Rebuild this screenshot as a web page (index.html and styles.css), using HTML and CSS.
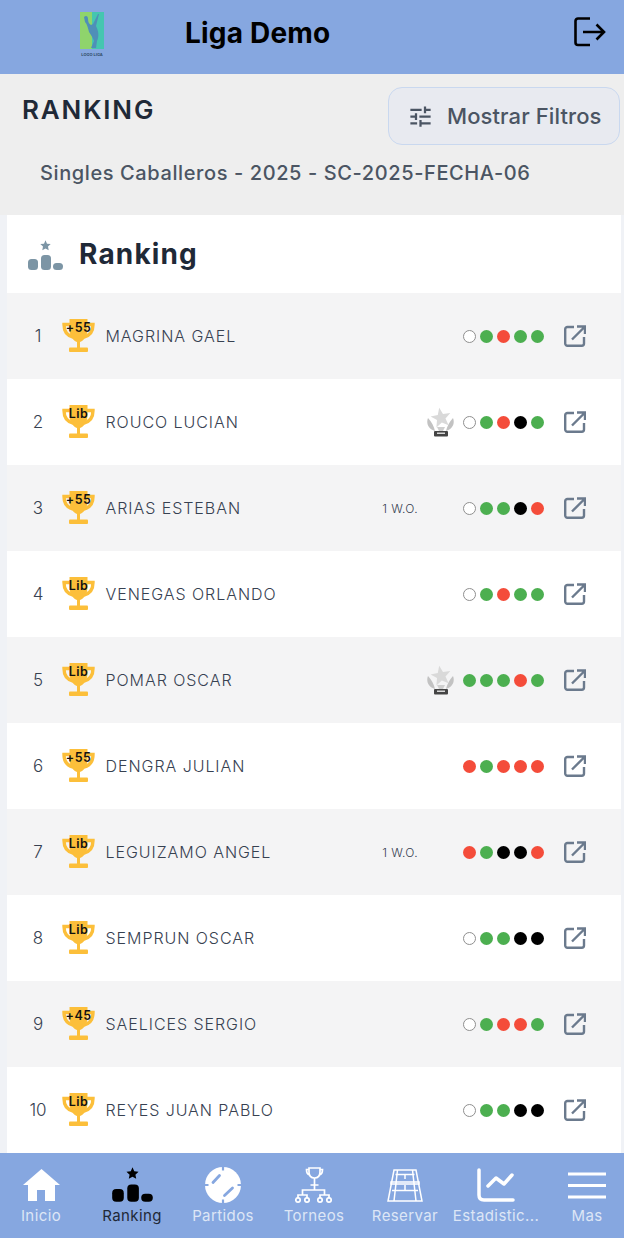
FILE: index.html
```html
<!DOCTYPE html>
<html>
	<head>
		<meta charset="UTF-8">
		<title>Liga Demo</title>
		<link rel="stylesheet" href="styles.css">
	</head>
	<body>
		<svg class="sprite">
			<symbol id="trophy" viewBox="0 0 33 33">
				<path d="M8 5.500H2C2 12 5 16.500 11 18M25 5.500h6C31 12 28 16.500 22 18" fill="none" stroke="#fcbf3a" stroke-width="3.400"/>
				<path d="M7.500 0H25.500V10C25.500 18 21 22 18 23V29H15V23C12 22 7.500 18 7.500 10Z" fill="#fcbf3a"/>
				<rect x="7" y="28.500" width="19" height="4.500" rx="1" fill="#fcbf3a"/>
			</symbol>
			<symbol id="open" viewBox="0 0 22 22">
				<path d="M10 2H3.500A2.200 2.200 0 0 0 1.200 4.200V18.500A2.200 2.200 0 0 0 3.500 20.700H17.800A2.200 2.200 0 0 0 20 18.500V12" fill="none" stroke="#6b7a8d" stroke-width="2.400"/>
				<path d="M8 14.500L20 2.500M13 1.500H21V9" fill="none" stroke="#6b7a8d" stroke-width="2.400"/>
			</symbol>
			<symbol id="podium" viewBox="0 0 35 31">
				<polygon points="17.500,0.300 19,3.700 22.700,4.100 20,6.600 20.700,10.200 17.500,8.400 14.300,10.200 15,6.600 12.300,4.100 16,3.700"/>
				<rect x="0" y="19" width="10" height="11" rx="3.500"/>
				<rect x="13" y="15" width="10" height="15" rx="3.500"/>
				<rect x="25" y="23" width="10" height="7" rx="3.500"/>
			</symbol>
			<symbol id="medal" viewBox="0 0 28 30">
				<path d="M2 11C0 16 2 22 9 24C8 20 6 15 2 11ZM27 11C29 16 27 22 20 24C21 20 23 15 27 11Z" fill="#c2c2c2"/>
				<polygon points="13.200,0.700 17,7 24.300,6.100 19.500,11.600 22.600,18.300 15.800,15.400 10.400,20.400 11,13.100 4.600,9.500 11.800,7.900" fill="#d9d9d9"/>
				<path d="M11 20L13 24H17L19 20Z" fill="#cfcfcf"/>
				<rect x="8" y="24" width="14" height="5.500" rx="1" fill="#444"/>
				<rect x="11" y="25.500" width="8" height="1.500" fill="#d8d8d8"/>
			</symbol>
		</svg>

		<div class="top">
			<div class="logo">
				<svg width="24" height="37" viewBox="0 0 24 37">
					<defs>
						<linearGradient id="logoBg" x1="0" x2="1" y1="0" y2="0">
							<stop offset="0.500" stop-color="#8fd46c"/>
							<stop offset="0.500" stop-color="#45c6b0"/>
						</linearGradient>
					</defs>
					<rect width="24" height="37" fill="url(#logoBg)"/>
					<path d="M4 5C6 3 8 4 8 7C8 10 9 12 11 13L13 12L18 2L19 2L16 14C19 20 19 25 17 29L16 36H11L14 29C13 26 11 23 9 20C8 16 7 12 5 10Z" fill="#4f8fb8"/>
				</svg>
				<span class="logoText">LOGO LIGA</span>
			</div>
			<div class="brand">Liga Demo</div>
			<svg class="logout" width="32" height="30" viewBox="0 0 32 30">
				<path d="M16 1.500H4A2.500 2.500 0 0 0 1.500 4V25.500A2.500 2.500 0 0 0 4 28H16M9 15H30M22.500 7.500L30 15L22.500 22.500" fill="none" stroke="#000" stroke-width="2.600"/>
			</svg>
		</div>

		<div class="filters">
			<div class="filtersHead">
				<h1>RANKING</h1>
				<button class="filterBtn">
					<svg width="27" height="27" viewBox="0 0 24 24"><path d="M3 17v2h6v-2H3zM3 5v2h10V5H3zm10 16v-2h8v-2h-8v-2h-2v6h2zM7 9v2H3v2h4v2h2V9H7zm14 4v-2H11v2h10zm-6-4h2V7h4V5h-4V3h-2v6z" fill="#4b5563"/></svg>
					Mostrar Filtros
				</button>
			</div>
			<div class="subtitle">Singles Caballeros - 2025 - SC-2025-FECHA-06</div>
		</div>

		<div class="card">
			<div class="cardHead">
				<svg class="podiumIcon" width="35" height="31"><use href="#podium"/></svg>
				<h2>Ranking</h2>
			</div>

			<div class="row">
				<span class="pos">1</span>
				<span class="cup"><svg width="33" height="33"><use href="#trophy"/></svg><b>+55</b></span>
				<span class="name">MAGRINA GAEL</span>
				<span class="slot"></span>
				<span class="dots"><i class="none"></i><i class="win"></i><i class="loss"></i><i class="win"></i><i class="win"></i></span>
				<svg class="open" width="22" height="22"><use href="#open"/></svg>
			</div>
			<div class="row">
				<span class="pos">2</span>
				<span class="cup"><svg width="33" height="33"><use href="#trophy"/></svg><b>Lib</b></span>
				<span class="name">ROUCO LUCIAN</span>
				<span class="slot"><svg width="28" height="30"><use href="#medal"/></svg></span>
				<span class="dots"><i class="none"></i><i class="win"></i><i class="loss"></i><i class="out"></i><i class="win"></i></span>
				<svg class="open" width="22" height="22"><use href="#open"/></svg>
			</div>
			<div class="row">
				<span class="pos">3</span>
				<span class="cup"><svg width="33" height="33"><use href="#trophy"/></svg><b>+55</b></span>
				<span class="name">ARIAS ESTEBAN</span>
				<span class="wo">1 W.O.</span>
				<span class="slot"></span>
				<span class="dots"><i class="none"></i><i class="win"></i><i class="win"></i><i class="out"></i><i class="loss"></i></span>
				<svg class="open" width="22" height="22"><use href="#open"/></svg>
			</div>
			<div class="row">
				<span class="pos">4</span>
				<span class="cup"><svg width="33" height="33"><use href="#trophy"/></svg><b>Lib</b></span>
				<span class="name">VENEGAS ORLANDO</span>
				<span class="slot"></span>
				<span class="dots"><i class="none"></i><i class="win"></i><i class="loss"></i><i class="win"></i><i class="win"></i></span>
				<svg class="open" width="22" height="22"><use href="#open"/></svg>
			</div>
			<div class="row">
				<span class="pos">5</span>
				<span class="cup"><svg width="33" height="33"><use href="#trophy"/></svg><b>Lib</b></span>
				<span class="name">POMAR OSCAR</span>
				<span class="slot"><svg width="28" height="30"><use href="#medal"/></svg></span>
				<span class="dots"><i class="win"></i><i class="win"></i><i class="win"></i><i class="loss"></i><i class="win"></i></span>
				<svg class="open" width="22" height="22"><use href="#open"/></svg>
			</div>
			<div class="row">
				<span class="pos">6</span>
				<span class="cup"><svg width="33" height="33"><use href="#trophy"/></svg><b>+55</b></span>
				<span class="name">DENGRA JULIAN</span>
				<span class="slot"></span>
				<span class="dots"><i class="loss"></i><i class="win"></i><i class="loss"></i><i class="loss"></i><i class="loss"></i></span>
				<svg class="open" width="22" height="22"><use href="#open"/></svg>
			</div>
			<div class="row">
				<span class="pos">7</span>
				<span class="cup"><svg width="33" height="33"><use href="#trophy"/></svg><b>Lib</b></span>
				<span class="name">LEGUIZAMO ANGEL</span>
				<span class="wo">1 W.O.</span>
				<span class="slot"></span>
				<span class="dots"><i class="loss"></i><i class="win"></i><i class="out"></i><i class="out"></i><i class="loss"></i></span>
				<svg class="open" width="22" height="22"><use href="#open"/></svg>
			</div>
			<div class="row">
				<span class="pos">8</span>
				<span class="cup"><svg width="33" height="33"><use href="#trophy"/></svg><b>Lib</b></span>
				<span class="name">SEMPRUN OSCAR</span>
				<span class="slot"></span>
				<span class="dots"><i class="none"></i><i class="win"></i><i class="win"></i><i class="out"></i><i class="out"></i></span>
				<svg class="open" width="22" height="22"><use href="#open"/></svg>
			</div>
			<div class="row">
				<span class="pos">9</span>
				<span class="cup"><svg width="33" height="33"><use href="#trophy"/></svg><b>+45</b></span>
				<span class="name">SAELICES SERGIO</span>
				<span class="slot"></span>
				<span class="dots"><i class="none"></i><i class="win"></i><i class="loss"></i><i class="loss"></i><i class="win"></i></span>
				<svg class="open" width="22" height="22"><use href="#open"/></svg>
			</div>
			<div class="row">
				<span class="pos">10</span>
				<span class="cup"><svg width="33" height="33"><use href="#trophy"/></svg><b>Lib</b></span>
				<span class="name">REYES JUAN PABLO</span>
				<span class="slot"></span>
				<span class="dots"><i class="none"></i><i class="win"></i><i class="win"></i><i class="out"></i><i class="out"></i></span>
				<svg class="open" width="22" height="22"><use href="#open"/></svg>
			</div>
		</div>

		<div class="nav">
			<div class="navItem">
				<span class="navIcon">
					<svg width="37" height="33" viewBox="0 0 37 33"><path d="M18.500 0L37 16H32V32H22V21H14V32H5V16H0Z" fill="#fff"/></svg>
				</span>
				<span>Inicio</span>
			</div>
			<div class="navItem active">
				<span class="navIcon">
					<svg width="41" height="36"><use href="#podium"/></svg>
				</span>
				<span>Ranking</span>
			</div>
			<div class="navItem">
				<span class="navIcon">
					<svg width="36" height="36" viewBox="0 0 36 36">
						<circle cx="18" cy="18" r="18" fill="#fff"/>
						<path d="M18 0V3.500M18 32.500V36M0 18H3.500M32.500 18H36" fill="none" stroke="#86a7e0" stroke-width="2.200"/>
						<path d="M8 15.500L14.500 8.500M19.500 28.500L27.500 21" fill="none" stroke="#86a7e0" stroke-width="2.800" stroke-linecap="round"/>
					</svg>
				</span>
				<span>Partidos</span>
			</div>
			<div class="navItem">
				<span class="navIcon">
					<svg width="38" height="38" viewBox="0 0 38 38">
						<g fill="none" stroke="#fff" stroke-width="1.700">
							<path d="M14 2H25V6C25 10 23 12 19.500 12C16 12 14 10 14 6ZM14 3.500H11.500C11.500 7 12.500 8.500 14.500 9M25 3.500H27.500C27.500 7 26.500 8.500 24.500 9"/>
							<path d="M19.500 12V24M15.500 19H23.500"/>
							<path d="M7.500 29V24H29.500V29M3 32V29H12V32M25 32V29H34V32"/>
							<circle cx="3" cy="34" r="2.200"/>
							<circle cx="12" cy="34" r="2.200"/>
							<circle cx="25" cy="34" r="2.200"/>
							<circle cx="34" cy="34" r="2.200"/>
						</g>
					</svg>
				</span>
				<span>Torneos</span>
			</div>
			<div class="navItem">
				<span class="navIcon">
					<svg width="36" height="33" viewBox="0 0 36 33">
						<g fill="none" stroke="#fff" stroke-width="1.500">
							<path d="M7 1H29L35 32H1ZM10.500 1L7 32M25.500 1L29 32M8.500 5.500H27.500M5 21.500H31M18 5.500V10M18 16V21.500"/>
							<path d="M4 13H32V15H4Z"/>
						</g>
					</svg>
				</span>
				<span>Reservar</span>
			</div>
			<div class="navItem">
				<span class="navIcon">
					<svg width="38" height="34" viewBox="0 0 38 34">
						<path d="M2 2V27Q2 32 7 32H36M11 18L19 10L27 16L35 7" fill="none" stroke="#fff" stroke-width="3.500" stroke-linecap="round" stroke-linejoin="round"/>
					</svg>
				</span>
				<span>Estadistic...</span>
			</div>
			<div class="navItem">
				<span class="navIcon">
					<svg width="38" height="27" viewBox="0 0 38 27">
						<path d="M0 2H38M0 13.500H38M0 25H38" stroke="#fff" stroke-width="3"/>
					</svg>
				</span>
				<span>Mas</span>
			</div>
		</div>
	</body>
</html>
```
FILE: styles.css
```css
*{
	box-sizing: border-box;
}
html,body{
	margin: 0;
	height: 100%;
}
body{
	display: flex;
	flex-direction: column;
	overflow: hidden;
	background-color: #f0f2f6;
	font-family: Inter, "Liberation Sans", sans-serif;
	color: #1f2937;
}
.sprite{
	display: none;
}

/* barra superior */
.top{
	display: flex;
	align-items: center;
	flex: none;
	height: 74px;
	padding: 0 18px 9px 80px;
	background-color: #86a7e0;
}
.logo{
	display: flex;
	flex-direction: column;
	align-items: center;
	width: 24px;
	margin-top: 4px;
}
.logo svg{
	display: block;
}
.logoText{
	margin-top: 3px;
	font-size: 4px;
	font-weight: 700;
	white-space: nowrap;
	color: #2f4a66;
}
.brand{
	flex: 1;
	margin-left: 81px;
	font-size: 28px;
	font-weight: 700;
	letter-spacing: 0.2px;
	color: #000;
}
.logout{
	margin-top: -1px;
}

/* filtros */
.filters{
	flex: none;
	height: 141px;
	padding: 13px 4px 0 22px;
	background-color: #eeeeee;
}
.filtersHead{
	display: flex;
	justify-content: space-between;
	align-items: flex-start;
}
.filtersHead h1{
	margin: 7px 0 0;
	font-size: 26px;
	font-weight: 600;
	letter-spacing: 1.85px;
	line-height: 32px;
	color: #1f2937;
}
.filterBtn{
	display: flex;
	align-items: center;
	gap: 13px;
	height: 58px;
	width: 232px;
	padding: 0 0 0 18px;
	border: 1.5px solid #c9d8ef;
	border-radius: 14px;
	background-color: #e8eaf0;
	font-family: inherit;
	font-size: 22px;
	font-weight: 500;
	letter-spacing: 0.1px;
	color: #4b5563;
}
.subtitle{
	margin: 15px 0 0 18px;
	font-size: 20px;
	font-weight: 500;
	letter-spacing: 0.6px;
	line-height: 26px;
	color: #4b5563;
}

/* tarjeta ranking */
.card{
	flex: 1;
	min-height: 0;
	margin: 0 3px 0 7px;
	overflow: hidden;
	background-color: #fff;
}
.cardHead{
	display: flex;
	align-items: center;
	height: 78px;
	padding-left: 21px;
}
.podiumIcon{
	fill: #7c95a5;
	margin-top: 2px;
}
.cardHead h2{
	margin: 0 0 0 16px;
	font-size: 28px;
	font-weight: 700;
	letter-spacing: 1.15px;
	color: #1f2937;
}
.row{
	display: flex;
	align-items: center;
	height: 86px;
	padding: 0 35px 0 21px;
	font-size: 16px;
	color: #374151;
}
.row:nth-child(even){
	background-color: #f4f4f5;
}
.pos{
	width: 20px;
	text-align: center;
	font-size: 17px;
	font-weight: 300;
}
.cup{
	position: relative;
	display: block;
	width: 33px;
	height: 33px;
	margin: -2px 11px 0 14px;
}
.cup b{
	position: absolute;
	left: 0;
	right: 0;
	top: 2px;
	text-align: center;
	font-size: 12.5px;
	font-weight: 600;
	letter-spacing: 0.4px;
	line-height: 14px;
	color: #111;
}
.name{
	flex: 1;
	margin-left: -0.5px;
	font-weight: 300;
	letter-spacing: 0.95px;
	white-space: nowrap;
}
.wo{
	font-size: 12px;
	font-weight: 300;
	letter-spacing: 0.4px;
}
.slot{
	display: flex;
	width: 28px;
	margin: 0 9px 0 8px;
}
.dots{
	display: flex;
	gap: 4px;
	margin-right: 20px;
}
.dots i{
	width: 13px;
	height: 13px;
	border-radius: 50%;
}
.win{
	background-color: #4caf50;
}
.loss{
	background-color: #f44c3a;
}
.out{
	background-color: #000;
}
.none{
	border: 1.5px solid #8f8f8f;
	background-color: #fff;
}

/* navegacion inferior */
.nav{
	display: flex;
	flex: none;
	gap: 17px;
	height: 85px;
	padding: 12px 0 0 4px;
	background-color: #86a7e0;
}
.navItem{
	display: flex;
	flex-direction: column;
	align-items: center;
	flex: none;
	width: 74px;
	font-size: 15px;
	letter-spacing: 0.4px;
	white-space: nowrap;
	color: #dde6f6;
}
.navItem.active{
	color: #1f2937;
}
.navItem.active .navIcon{
	fill: #000;
}
.navIcon{
	display: flex;
	justify-content: center;
	align-items: center;
	height: 40px;
	margin-bottom: 1px;
}
```
